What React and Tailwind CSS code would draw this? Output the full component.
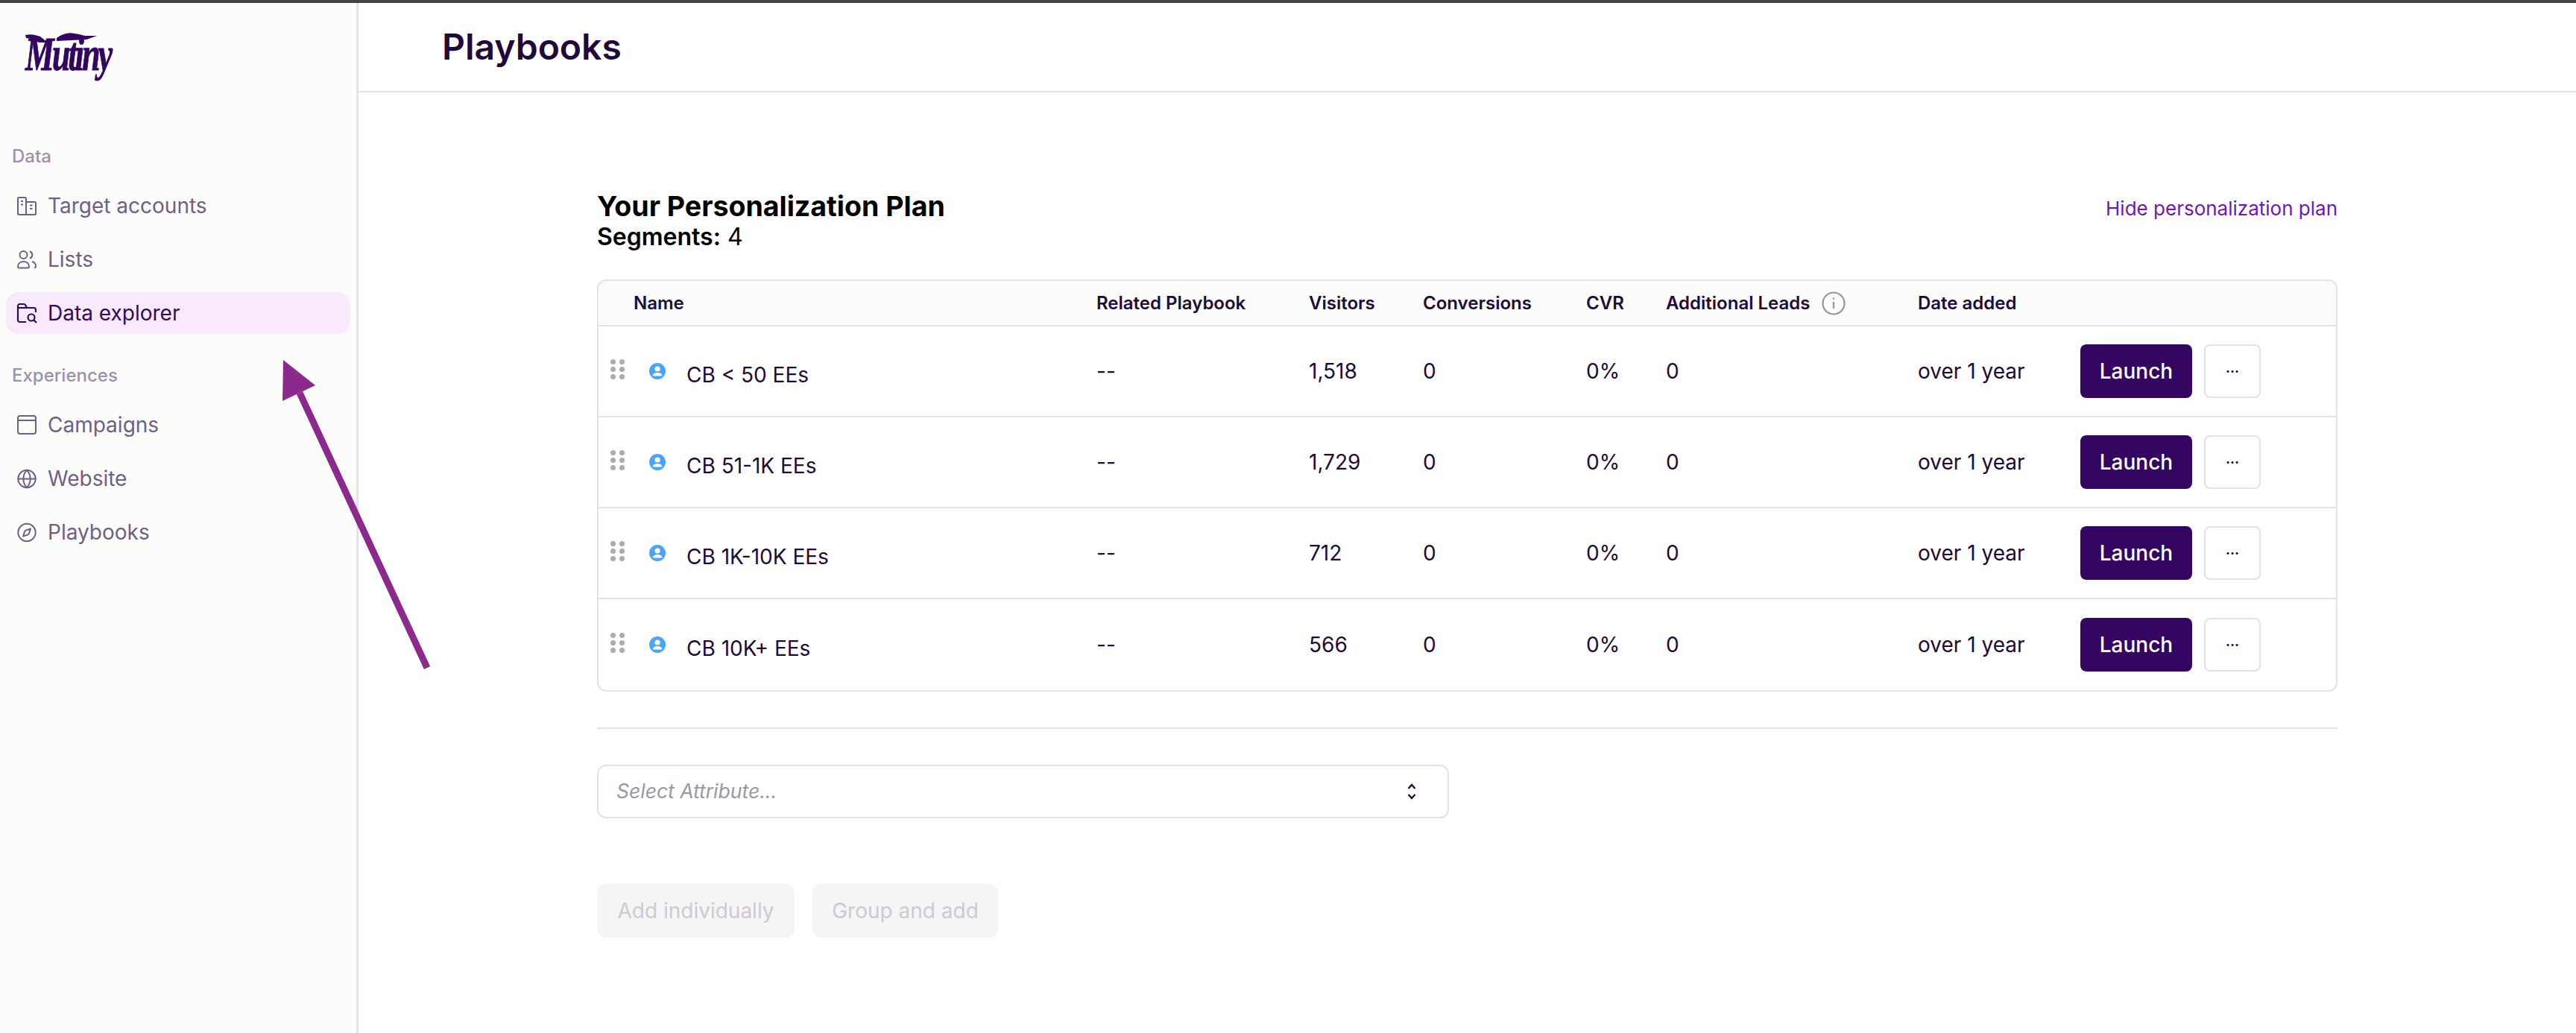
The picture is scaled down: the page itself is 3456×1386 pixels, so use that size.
import { Globe, Compass } from "lucide-react";

const SEGMENTS = [
  { name: "CB < 50 EEs", visitors: "1,518" },
  { name: "CB 51-1K EEs", visitors: "1,729" },
  { name: "CB 1K-10K EEs", visitors: "712" },
  { name: "CB 10K+ EEs", visitors: "566" },
];

const COLS = "grid grid-cols-[47px_621px_285px_153px_219px_107px_338px_218px_1fr] items-center";

function AccountsIcon() {
  return (
    <svg width="28" height="28" viewBox="0 0 28 28" fill="none" stroke="currentColor" strokeWidth="2">
      <path d="M2 4.5a1.5 1.5 0 0 1 1.5-1.5h8a1.5 1.5 0 0 1 1.5 1.5V26H3.500A1.500 1.500 0 0 1 2 24.500z" />
      <path d="M13 9h11.500a1.500 1.500 0 0 1 1.500 1.500v14a1.500 1.500 0 0 1-1.500 1.500H13" />
      <path d="M6 8h3M6 12.500h3M18 13.500h3.500M18 18h3.500" />
    </svg>
  );
}

function ListsIcon() {
  return (
    <svg width="28" height="28" viewBox="0 0 28 28" fill="none" stroke="currentColor" strokeWidth="2">
      <circle cx="9.500" cy="8" r="5" />
      <path d="M18 3.300a5 5 0 0 1 0 9.400" />
      <path d="M2 23.500c0-4 3.300-6.500 7.500-6.500s7.500 2.500 7.500 6.500c0 1.500-1 2-2 2H4c-1 0-2-.5-2-2z" />
      <path d="M21 17c3 .8 5 3 5 6 0 1.500-.7 2.300-2 2.500" />
    </svg>
  );
}

function ExplorerIcon() {
  return (
    <svg width="28" height="28" viewBox="0 0 28 28" fill="none" stroke="currentColor" strokeWidth="2.200">
      <path d="M13 26H4.500A2.500 2.500 0 0 1 2 23.500v-19A2.500 2.500 0 0 1 4.500 2H10a2.500 2.500 0 0 1 2.200 1.300L14 7h9.500A2.500 2.500 0 0 1 26 9.500V13" />
      <path d="M2 7h12" />
      <circle cx="20" cy="20" r="4.500" />
      <path d="M23.500 23.500 27 27" />
    </svg>
  );
}

function CampaignsIcon() {
  return (
    <svg width="28" height="28" viewBox="0 0 28 28" fill="none" stroke="currentColor" strokeWidth="2">
      <rect x="2" y="2" width="24" height="24" rx="3" />
      <path d="M2 8h24" />
    </svg>
  );
}

function NavItem({ icon, label, active }) {
  return (
    <div
      className={
        active
          ? "mx-2 flex h-14 items-center gap-[14px] rounded-2xl bg-[#f8e9fc] pl-[14px] text-[#320a5e]"
          : "mx-2 flex h-14 items-center gap-[14px] pl-[14px] text-[#6f5f86]"
      }
    >
      <span className="flex w-[28px] shrink-0 items-center justify-center">{icon}</span>
      <span className="text-[28px] leading-none">{label}</span>
    </div>
  );
}

function Logo() {
  return (
    <div className="relative ml-[2px] h-[60px] w-[124px]">
      <span className="block origin-left scale-x-[0.68] font-[family-name:'Liberation_Serif',serif] text-[64px] leading-[56px] font-bold tracking-[-4px] whitespace-nowrap text-[#33065f] italic [-webkit-text-stroke:1px_#33065f]">
        Mutiny
      </span>
      <svg className="absolute top-[-2px] left-0" width="124" height="20" viewBox="0 0 124 20" fill="#33065f">
        <path d="M0 4 C8 2 14 4 20 6 L30 14 L18 14 C12 10 6 8 1 8z" />
        <path d="M42 8 C50 2 58 0 66 2 L72 3 L80 5 L96 5 L82 10 L42 12z" />
      </svg>
    </div>
  );
}

function Sidebar() {
  return (
    <aside className="flex w-[481px] shrink-0 flex-col border-r-[3px] border-[#e2e2e8] bg-[#fcfcfa]">
      <div className="h-[102px] pt-[41px] pl-8">
        <Logo />
      </div>
      <div className="mt-[92px] pl-4 text-2xl leading-none font-medium text-[#9d91ad]">Data</div>
      <div className="mt-[26px] flex flex-col gap-4">
        <NavItem icon={<AccountsIcon />} label="Target accounts" />
        <NavItem icon={<ListsIcon />} label="Lists" />
        <NavItem icon={<ExplorerIcon />} label="Data explorer" active />
      </div>
      <div className="mt-[44px] pl-4 text-2xl leading-none font-medium text-[#9d91ad]">Experiences</div>
      <div className="mt-[26px] flex flex-col gap-4">
        <NavItem icon={<CampaignsIcon />} label="Campaigns" />
        <NavItem icon={<Globe size={29} strokeWidth={1.7} />} label="Website" />
        <NavItem icon={<Compass size={29} strokeWidth={1.7} />} label="Playbooks" />
      </div>
    </aside>
  );
}

function UserDot() {
  return (
    <svg width="24" height="24" viewBox="0 0 24 24">
      <circle cx="12" cy="12" r="11" fill="#4aa5f8" />
      <circle cx="12" cy="9" r="3.600" fill="#fff" />
      <path d="M5.500 18c.6-2.800 3.200-4 6.500-4s5.900 1.200 6.500 4c-1.700.8-11.300.8-13 0z" fill="#fff" />
    </svg>
  );
}

function DragDots() {
  return (
    <div className="mt-[-6px] ml-[16px] grid w-[19px] grid-cols-2 gap-x-[5px] gap-y-[3px]">
      {[0, 1, 2, 3, 4, 5].map((i) => (
        <span key={i} className="size-[7px] rounded-full bg-[#acacac]" />
      ))}
    </div>
  );
}

function InfoIcon() {
  return (
    <svg width="32" height="32" viewBox="0 0 32 32" fill="none" stroke="#96949c" strokeWidth="2.200">
      <circle cx="16" cy="16" r="14.500" />
      <path d="M16 14v9" />
      <circle cx="16" cy="9.500" r="1.300" fill="#96949c" stroke="none" />
    </svg>
  );
}

function Row({ segment, last }) {
  return (
    <div className={last ? `${COLS} h-[122px] text-[28px] text-[#200a3a]` : `${COLS} h-[122px] border-b-2 border-[#e2e2e8] text-[28px] text-[#200a3a]`}>
      <DragDots />
      <div className="flex items-center pt-[10px]">
        <span className="mt-[-10px] mr-[27px] ml-[20px] flex"><UserDot /></span>
        <span>{segment.name}</span>
      </div>
      <span>--</span>
      <span>{segment.visitors}</span>
      <span>0</span>
      <span>0%</span>
      <span>0</span>
      <span>over 1 year</span>
      <div className="flex gap-[16px]">
        <button className="h-[72px] w-[150px] rounded-lg bg-[#340661] text-[28px] font-medium text-white">Launch</button>
        <button className="h-[72px] w-[76px] rounded-lg border-2 border-[#e2e2e8] bg-white text-[18px] font-bold text-[#200a3a]">···</button>
      </div>
    </div>
  );
}

export default function App() {
  return (
    <div className="relative h-[1386px] w-[3456px] overflow-hidden bg-white font-[family-name:Inter,sans-serif]">
      <div className="h-[4px] bg-[#444444]" />
      <div className="flex h-[1382px]">
        <Sidebar />
        <main className="min-w-0 flex-1">
          <header className="flex h-[120px] items-center border-b-2 border-[#e2e2e8] pl-[112px]">
            <h1 className="text-[48px] leading-none font-semibold text-[#1f0a3a]">Playbooks</h1>
          </header>

          <div className="ml-[320px] w-[2335px] pt-[131px]">
            <div className="flex items-start justify-between">
              <div className="text-black">
                <div className="text-[37.5px] leading-[43px] font-bold">Your Personalization Plan</div>
                <div className="text-[32px] leading-[40px]"><span className="font-semibold">Segments:</span> 4</div>
              </div>
              <span className="mt-[5px] text-[26px] text-[#6e17b8]">Hide personalization plan</span>
            </div>

            <div className="mt-[37px] overflow-hidden rounded-xl border-2 border-[#e2e2e8]">
              <div className={`${COLS} h-[61px] border-b-2 border-[#e2e2e8] bg-[#fbfbf9] text-2xl font-semibold text-[#200a3a]`}>
                <span />
                <span>Name</span>
                <span>Related Playbook</span>
                <span>Visitors</span>
                <span>Conversions</span>
                <span>CVR</span>
                <span className="flex items-center gap-4">Additional Leads <InfoIcon /></span>
                <span>Date added</span>
                <span />
              </div>
              {SEGMENTS.map((s, i) => (
                <Row key={s.name} segment={s} last={i === SEGMENTS.length - 1} />
              ))}
            </div>

            <div className="mt-[48px] h-[2px] bg-[#e2e2e8]" />

            <div className="mt-[48px] flex h-[72px] w-[1143px] items-center justify-between rounded-xl border-2 border-[#e2e2e8] pr-[41px] pl-[24px]">
              <span className="text-[26.5px] text-[#9a98a0] italic">Select Attribute...</span>
              <svg width="14" height="24" viewBox="0 0 14 24" fill="none" stroke="#200a3a" strokeWidth="2.400">
                <path d="M2.500 8 7 3l4.500 5M2.500 16 7 21l4.500-5" />
              </svg>
            </div>

            <div className="mt-[88px] flex gap-[24px]">
              <button className="h-[72px] w-[265px] rounded-xl bg-[#f5f5f6] text-[28px] text-[#cdcad2]">Add individually</button>
              <button className="h-[72px] w-[249px] rounded-xl bg-[#f5f5f6] text-[28px] text-[#cdcad2]">Group and add</button>
            </div>
          </div>
        </main>
      </div>

      {/* annotation arrow drawn over the page */}
      <svg className="absolute top-0 left-0" width="3456" height="1386" fill="none">
        <path d="M573 896 402 527" stroke="#8b2a8c" strokeWidth="9" />
        <path d="M380 483 423 517 379 538z" fill="#8b2a8c" />
      </svg>
    </div>
  );
}
